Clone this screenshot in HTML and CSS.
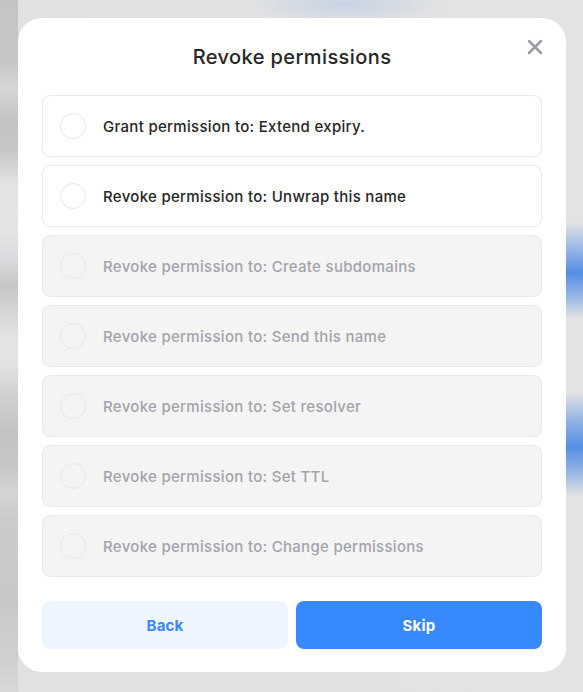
FILE: index.html
```html
<!DOCTYPE html>
<html>
<head>
<meta charset="utf-8">
<link rel="stylesheet" href="styles.css">
</head>
<body>
<div class="backdrop">
  <div class="modal">
    <button class="close" aria-label="Close">
      <svg width="16" height="16" viewBox="0 0 16 16"><path d="M2 2L14 14M14 2L2 14" stroke="#9b9ba5" stroke-width="2.5" stroke-linecap="round"/></svg>
    </button>
    <h1 class="title">Revoke permissions</h1>
    <div class="list">
      <div class="row"><span class="radio"></span><span class="label">Grant permission to: Extend expiry.</span></div>
      <div class="row"><span class="radio"></span><span class="label">Revoke permission to: Unwrap this name</span></div>
      <div class="row disabled"><span class="radio"></span><span class="label">Revoke permission to: Create subdomains</span></div>
      <div class="row disabled"><span class="radio"></span><span class="label">Revoke permission to: Send this name</span></div>
      <div class="row disabled"><span class="radio"></span><span class="label">Revoke permission to: Set resolver</span></div>
      <div class="row disabled"><span class="radio"></span><span class="label">Revoke permission to: Set TTL</span></div>
      <div class="row disabled"><span class="radio"></span><span class="label">Revoke permission to: Change permissions</span></div>
    </div>
    <div class="actions">
      <button class="btn secondary">Back</button>
      <button class="btn primary">Skip</button>
    </div>
  </div>
</div>
</body>
</html>
```
FILE: styles.css
```css
html, body {
  margin: 0;
  padding: 0;
}
body {
  width: 583px;
  height: 692px;
  overflow: hidden;
  font-family: Inter, "Noto Sans", sans-serif;
  background:
    linear-gradient(180deg,
      rgba(85,142,228,0) 222px,
      rgba(85,142,228,0.55) 250px,
      rgba(85,142,228,1) 273px,
      rgba(85,142,228,0.55) 296px,
      rgba(85,142,228,0) 318px,
      rgba(85,142,228,0) 392px,
      rgba(85,142,228,0.55) 420px,
      rgba(85,142,228,1) 447px,
      rgba(85,142,228,0.55) 472px,
      rgba(85,142,228,0) 496px) 560px 0 / 23px 692px no-repeat,
    linear-gradient(180deg,
      #c4c4c4 0px, #c6c6c6 60px, #d6d6d6 88px, #c3c3c3 120px, #c6c6c6 150px,
      #e3e3e3 185px, #e4e4e4 230px, #dcdde0 255px, #c6c6c6 285px, #d4d4d4 310px,
      #e3e3e3 340px, #e3e3e3 365px, #d0d0d0 395px, #c3c3c3 430px, #c6c6c6 465px,
      #d4d4d4 490px, #cbcbcb 520px, #c8c8c8 600px, #d0d0d0 660px, #d8d8d8 692px) 0 0 / 18px 692px no-repeat,
    radial-gradient(ellipse 100px 22px at 345px 4px, rgba(198,210,228,0.95), rgba(198,210,228,0) 100%),
    linear-gradient(90deg, #cdcdcd 0px, #d8d8d8 10px, #e1e1e1 20px, #e3e3e3 100%);
}
.backdrop {
  padding: 18px 17px 20px 18px;
}
.modal {
  position: relative;
  width: 548px;
  height: 654px;
  box-sizing: border-box;
  background: #fff;
  border-radius: 24px;
  padding: 24px;
  display: flex;
  flex-direction: column;
}
.close {
  position: absolute;
  top: 21px;
  right: 23px;
  width: 16px;
  height: 16px;
  padding: 0;
  border: 0;
  background: none;
  display: flex;
}
.title {
  margin: 0;
  height: 30px;
  line-height: 30px;
  text-align: center;
  font-size: 20px;
  font-weight: 500;
  color: #262626;
  letter-spacing: 0.4px;
}
.list {
  margin-top: 23px;
  display: flex;
  flex-direction: column;
  gap: 8px;
}
.row {
  height: 62px;
  box-sizing: border-box;
  border: 1px solid #e8e8e8;
  border-radius: 8px;
  background: #fff;
  display: flex;
  align-items: center;
  padding-left: 17px;
  gap: 17px;
}
.row.disabled {
  background: #f4f4f4;
}
.radio {
  width: 26px;
  height: 26px;
  box-sizing: border-box;
  border-radius: 50%;
  border: 1px solid #e8e8e8;
  background: transparent;
  flex: none;
}
.label {
  font-size: 15px;
  font-weight: 500;
  color: #262626;
  letter-spacing: 0.3px;
}
.row.disabled .label {
  color: #a3a3ab;
}
.actions {
  margin-top: 24px;
  display: flex;
  gap: 8px;
}
.btn {
  flex: 1;
  height: 48px;
  border: 0;
  border-radius: 8px;
  font-family: Inter, "Noto Sans", sans-serif;
  font-size: 15px;
  font-weight: 700;
  letter-spacing: 0.2px;
}
.btn.secondary {
  background: #eef5ff;
  color: #3888ff;
}
.btn.primary {
  background: #3888ff;
  color: #fff;
}
```
